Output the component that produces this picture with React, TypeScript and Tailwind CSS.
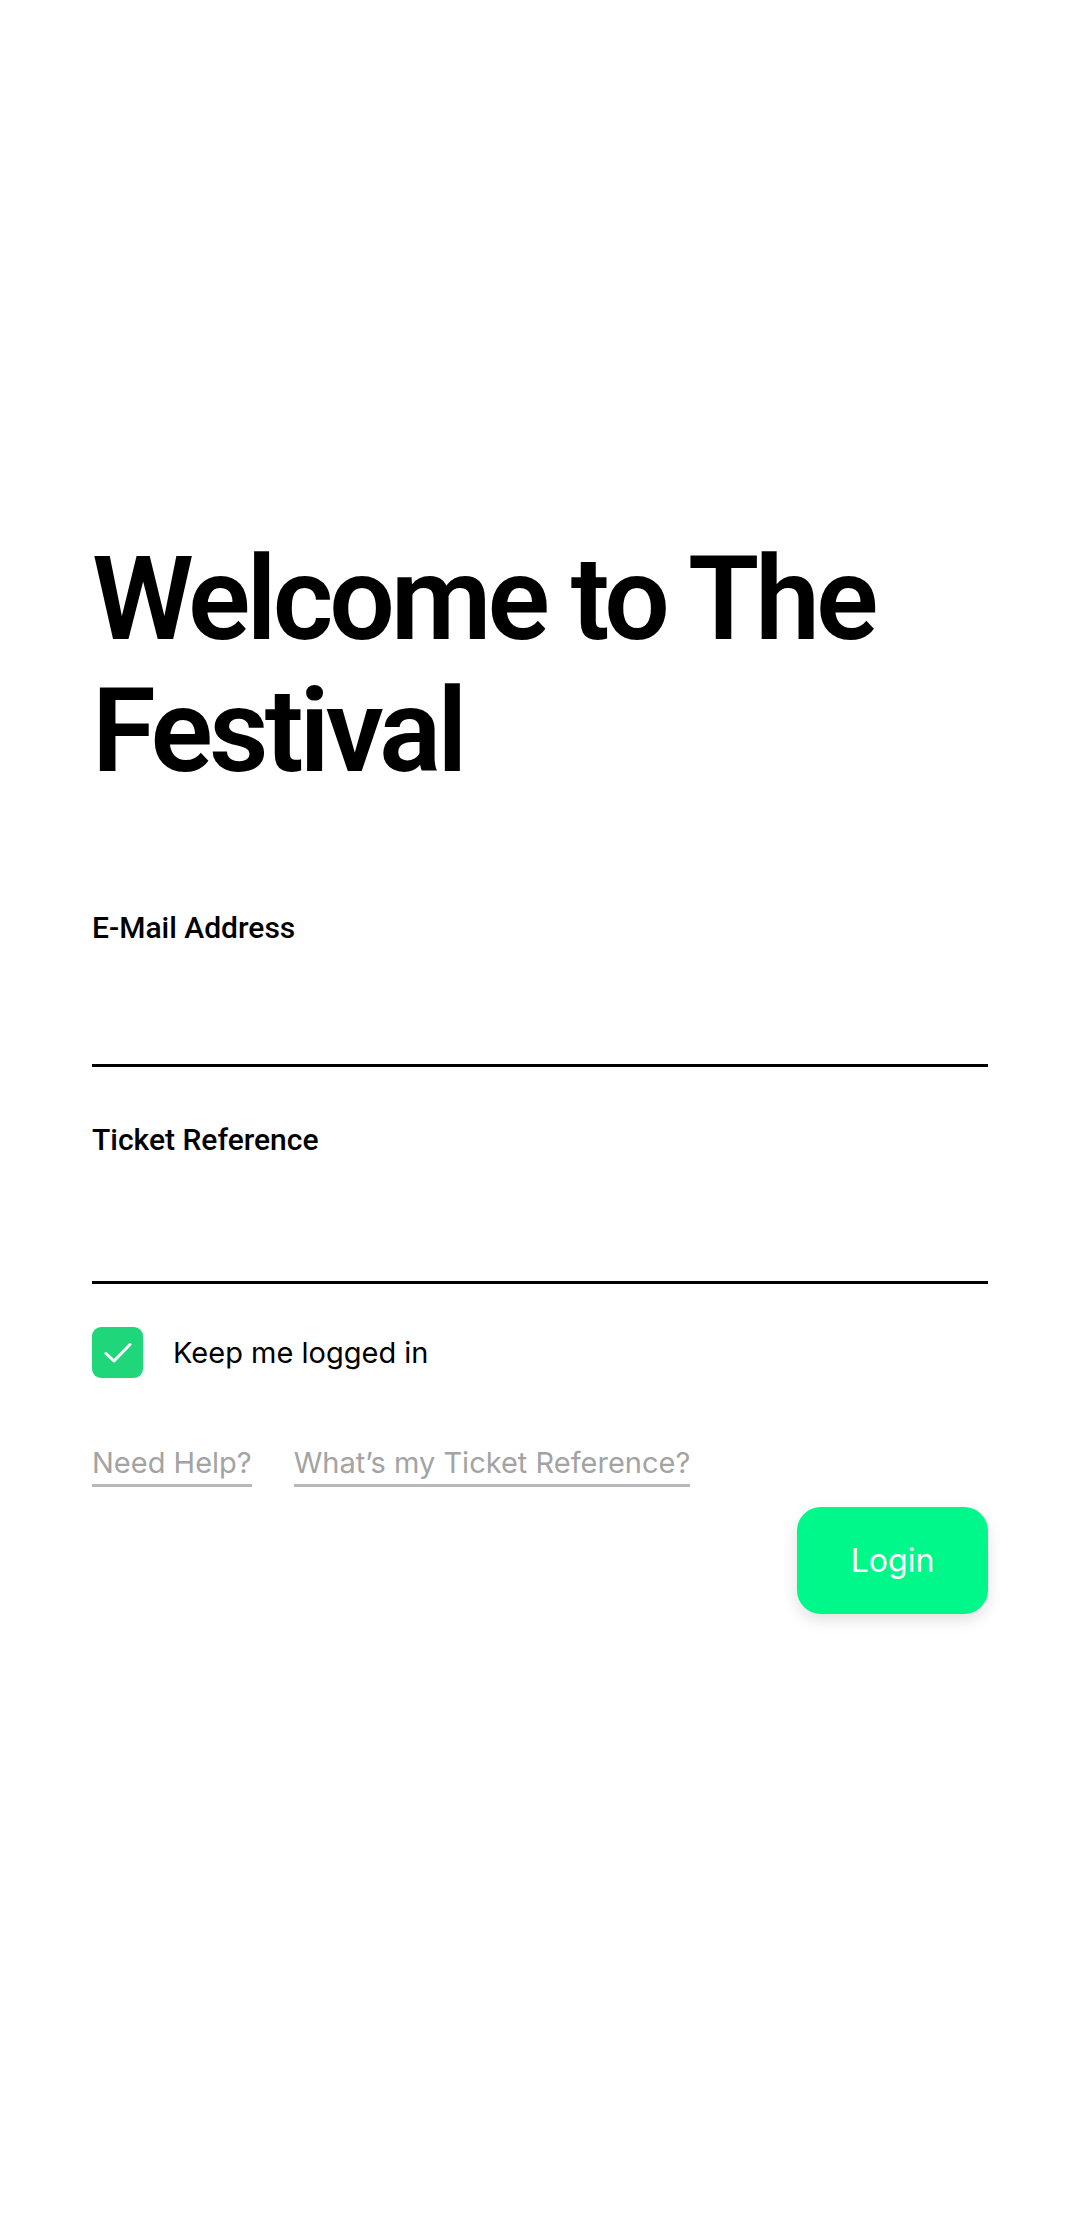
import React, { useState } from "react";

const Field = ({ label, h }: { label: string; h: string }) => (
  <div className="flex flex-col">
    <label
      className="text-[30px] leading-[34px] font-medium text-black"
      style={{ fontFamily: "Roboto, sans-serif" }}
    >
      {label}
    </label>
    <input
      className={`${h} w-full border-b-[3px] border-black bg-transparent outline-none text-[30px]`}
    />
  </div>
);

export default function App() {
  const [keep, setKeep] = useState(true);

  return (
    <div
      className="w-[1080px] min-h-[2220px] bg-white px-[92px] pt-[533px]"
      style={{ fontFamily: "Roboto, Arial, sans-serif" }}
    >
      <h1 className="text-[116px] leading-[132px] font-semibold tracking-[-4px] text-black">
        Welcome to The Festival
      </h1>

      <div className="mt-[114px] flex flex-col gap-[56px]">
        <Field label="E-Mail Address" h="h-[122px]" />
        <Field label="Ticket Reference" h="h-[127px]" />
      </div>

      <div className="mt-[43px] flex items-center gap-[30px]">
        <button
          onClick={() => setKeep(!keep)}
          className="w-[51px] h-[51px] rounded-[9px] bg-[#1fd67b] flex items-center justify-center"
        >
          {keep && (
            <svg width="28" height="22" viewBox="0 0 28 22" fill="none">
              <path
                d="M2 11.5 L10 19 L26 2.5"
                stroke="white"
                strokeWidth="3"
                strokeLinecap="round"
                strokeLinejoin="round"
              />
            </svg>
          )}
        </button>
        <span
          className="text-[29px] text-black"
          style={{ fontFamily: "Inter, sans-serif" }}
        >
          Keep me logged in
        </span>
      </div>

      <div
        className="mt-[68px] flex gap-[42px] text-[29px] leading-[34px] text-[#a3a3a3]"
        style={{ fontFamily: "Inter, sans-serif" }}
      >
        <a className="border-b-[3px] border-[#b8b8b8] pb-[4px] cursor-pointer">
          Need Help?
        </a>
        <a className="border-b-[3px] border-[#b8b8b8] pb-[4px] cursor-pointer">
          What’s my Ticket Reference?
        </a>
      </div>

      <div className="mt-[20px] flex justify-end">
        <button
          className="w-[191px] h-[107px] rounded-[24px] bg-[#00f78a] text-white text-[32px] shadow-[0_6px_16px_rgba(0,0,0,0.12)]"
          style={{ fontFamily: "Inter, sans-serif" }}
        >
          Login
        </button>
      </div>
    </div>
  );
}
